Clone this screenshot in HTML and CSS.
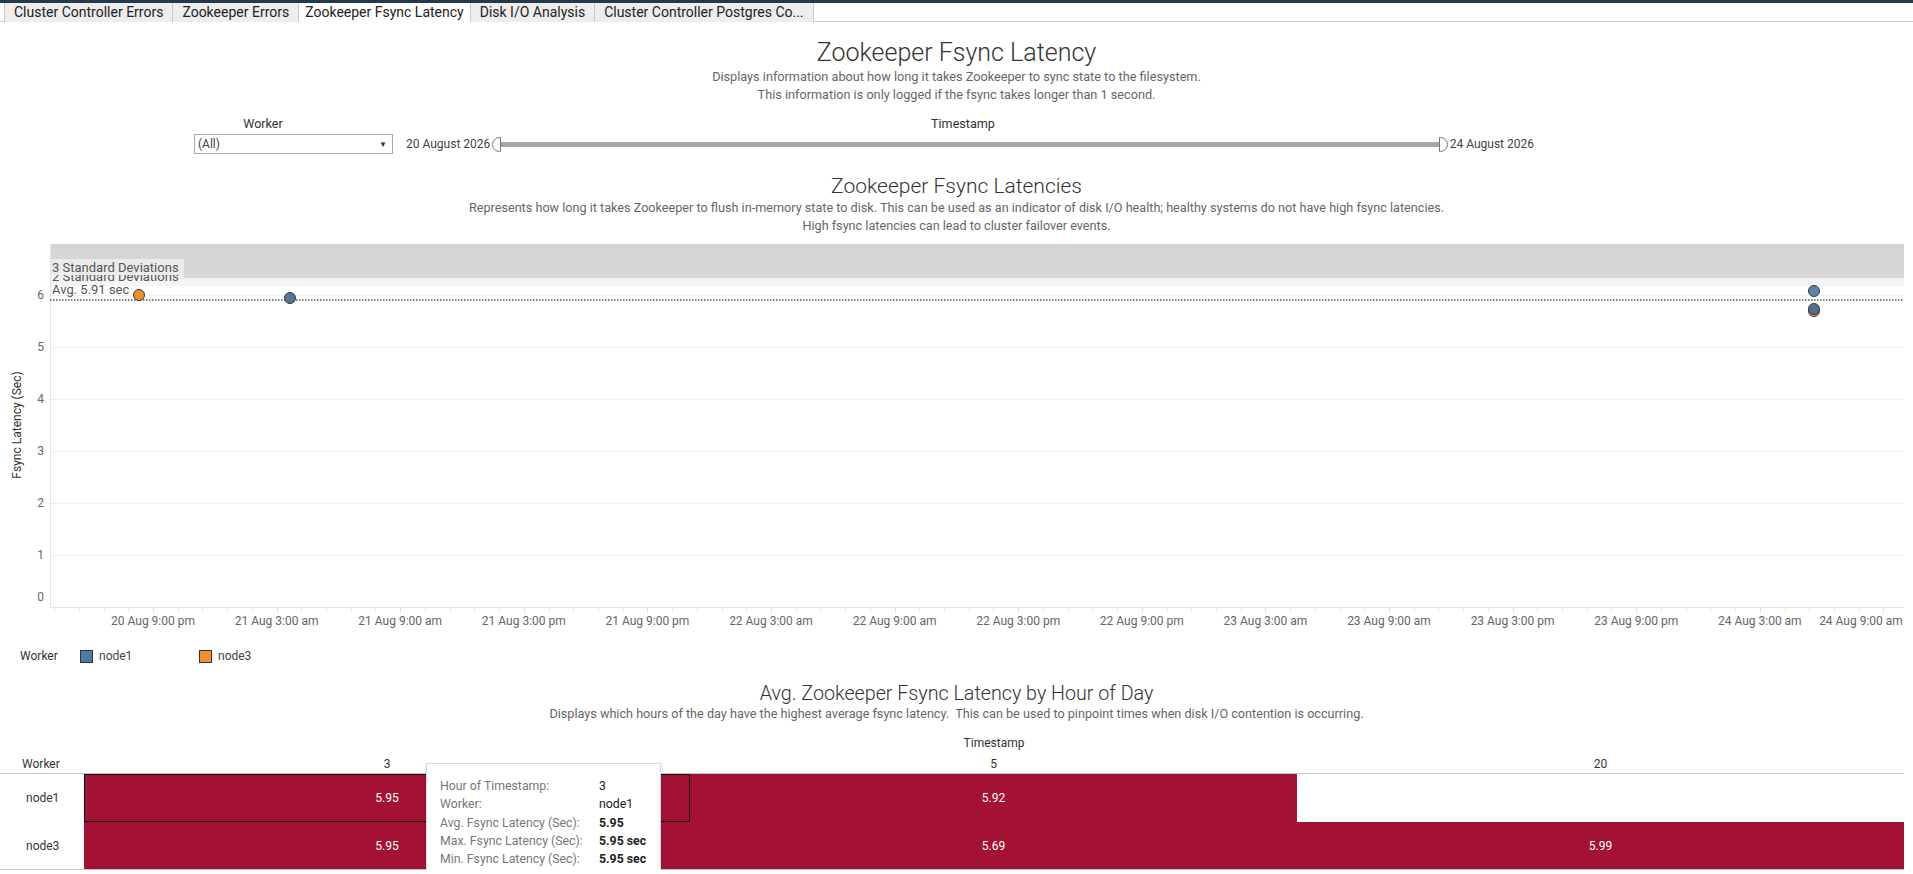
FILE: index.html
```html
<!DOCTYPE html>
<html lang="en">
<head>
    <meta charset="UTF-8">
    <meta name="viewport" content="width=device-width, initial-scale=1.0">
    <title>Zookeeper Fsync Latency</title>
    <link rel="stylesheet" href="styles.css">
</head>
<body>
    <!-- 工作表标签 -->
    <div class="tabbar">
        <span class="tab">Cluster Controller Errors</span>
        <span class="tab">Zookeeper Errors</span>
        <span class="tab active">Zookeeper Fsync Latency</span>
        <span class="tab">Disk I/O Analysis</span>
        <span class="tab">Cluster Controller Postgres Co...</span>
    </div>

    <div class="dashboard">
        <div class="page-head">
            <h1>Zookeeper Fsync Latency</h1>
            <p>Displays information about how long it takes Zookeeper to sync state to the filesystem.<br>This information is only logged if the fsync takes longer than 1 second.</p>
        </div>

        <!-- 筛选器 -->
        <div class="filters">
            <div class="filter worker-filter">
                <div class="filter-label">Worker</div>
                <div class="select">
                    <span>(All)</span>
                    <span class="caret">&#9660;</span>
                </div>
            </div>
            <div class="filter time-filter">
                <div class="filter-label">Timestamp</div>
                <div class="slider">
                    <span class="date">20 August 2026</span>
                    <span class="handle handle-left"></span>
                    <span class="track"></span>
                    <span class="handle handle-right"></span>
                    <span class="date">24 August 2026</span>
                </div>
            </div>
        </div>

        <!-- 散点图 -->
        <div class="chart">
            <h2>Zookeeper Fsync Latencies</h2>
            <p class="sub">Represents how long it takes Zookeeper to flush in-memory state to disk. This can be used as an indicator of disk I/O health; healthy systems do not have high fsync latencies.<br>High fsync latencies can lead to cluster failover events.</p>
            <svg class="plot" id="plot" width="1913" height="395" viewBox="0 0 1913 395">
                <rect x="50" y="4" width="1854" height="34" fill="#d6d6d6"/>
                <rect x="50" y="38" width="1854" height="8" fill="#f4f4f4"/>
                <g id="grid" stroke="#efefef" stroke-width="1"></g>
                <line x1="50.5" y1="4" x2="50.5" y2="367" stroke="#e4e4e4"/>
                <line x1="50" y1="367.5" x2="1904" y2="367.5" stroke="#e4e4e4"/>
                <g id="ticks" stroke="#e0e0e0" stroke-width="1"></g>

                <!-- 参考线标签 -->
                <rect x="51" y="29" width="133" height="10" fill="#f0f0f0"/>
                <text class="band-label" x="52" y="41">2 Standard Deviations</text>
                <rect x="51" y="19" width="133" height="16" fill="#ebebeb"/>
                <text class="band-label" x="52" y="32">3 Standard Deviations</text>
                <text class="band-label" x="52" y="54">Avg. 5.91 sec</text>

                <line x1="50" y1="60" x2="1904" y2="60" stroke="#555" stroke-width="1.3" stroke-dasharray="1.5 1.5"/>

                <circle cx="139" cy="55" r="5.5" fill="#f28e2b" stroke="#3a3a3a"/>
                <circle cx="290" cy="58" r="5.5" fill="#587591" stroke="#3a3a3a"/>
                <circle cx="1814" cy="51" r="5.5" fill="#5b83ad" stroke="#3a3a3a"/>
                <circle cx="1814" cy="71" r="5.5" fill="#f28e2b" stroke="#3a3a3a"/>
                <circle cx="1814" cy="69" r="5.5" fill="#53708f" stroke="#3a3a3a"/>

                <g class="y-labels">
                    <text x="44" y="59">6</text>
                    <text x="44" y="111">5</text>
                    <text x="44" y="163">4</text>
                    <text x="44" y="215">3</text>
                    <text x="44" y="267">2</text>
                    <text x="44" y="319">1</text>
                    <text x="44" y="361">0</text>
                </g>
                <text class="axis-title" transform="translate(21 185) rotate(-90)">Fsync Latency (Sec)</text>
                <g class="x-labels" id="xLabels"></g>
            </svg>
        </div>

        <!-- 图例 -->
        <div class="legend">
            <span class="legend-title">Worker</span>
            <span class="legend-item"><i class="swatch blue"></i>node1</span>
            <span class="legend-item"><i class="swatch orange"></i>node3</span>
        </div>

        <!-- 热力表 -->
        <div class="heatmap">
            <h2>Avg. Zookeeper Fsync Latency by Hour of Day</h2>
            <p class="sub">Displays which hours of the day have the highest average fsync latency.&nbsp; This can be used to pinpoint times when disk I/O contention is occurring.</p>
            <div class="col-title">Timestamp</div>
            <div class="table">
                <div class="head row-label">Worker</div>
                <div class="head">3</div>
                <div class="head">5</div>
                <div class="head">20</div>

                <div class="row-label">node1</div>
                <div class="cell filled selected">5.95</div>
                <div class="cell filled">5.92</div>
                <div class="cell"></div>

                <div class="row-label last">node3</div>
                <div class="cell filled last">5.95</div>
                <div class="cell filled last">5.69</div>
                <div class="cell filled last">5.99</div>

                <!-- 悬停提示 -->
                <div class="tooltip">
                    <span class="tip-key">Hour of Timestamp:</span><span class="tip-val">3</span>
                    <span class="tip-key">Worker:</span><span class="tip-val">node1</span>
                    <span class="tip-key">Avg. Fsync Latency (Sec):</span><b class="tip-val">5.95</b>
                    <span class="tip-key">Max. Fsync Latency (Sec):</span><b class="tip-val">5.95 sec</b>
                    <span class="tip-key">Min. Fsync Latency (Sec):</span><b class="tip-val">5.95 sec</b>
                </div>
            </div>
        </div>
    </div>

    <script>
        (function() {
            var ns = 'http://www.w3.org/2000/svg';
            var grid = document.querySelector('#grid');
            var ticks = document.querySelector('#ticks');
            var xLabels = document.querySelector('#xLabels');

            // 水平网格线 6..1
            [55, 107, 159, 211, 263, 315].forEach(function(y) {
                var line = document.createElementNS(ns, 'line');
                line.setAttribute('x1', 51);
                line.setAttribute('x2', 1904);
                line.setAttribute('y1', y + 0.5);
                line.setAttribute('y2', y + 0.5);
                grid.appendChild(line);
            });

            // 时间轴刻度
            var names = ['20 Aug 9:00 pm', '21 Aug 3:00 am', '21 Aug 9:00 am', '21 Aug 3:00 pm', '21 Aug 9:00 pm',
                '22 Aug 3:00 am', '22 Aug 9:00 am', '22 Aug 3:00 pm', '22 Aug 9:00 pm', '23 Aug 3:00 am',
                '23 Aug 9:00 am', '23 Aug 3:00 pm', '23 Aug 9:00 pm', '24 Aug 3:00 am', '24 Aug 9:00 am'];
            var step = 123.6;
            for (var m = 153 - step; m < 1904; m += step / 5) {
                if (m < 51) continue;
                var tick = document.createElementNS(ns, 'line');
                var x = Math.round(m) + 0.5;
                tick.setAttribute('x1', x);
                tick.setAttribute('x2', x);
                tick.setAttribute('y1', 368);
                tick.setAttribute('y2', 371);
                ticks.appendChild(tick);
            }
            names.forEach(function(name, i) {
                var x = 153 + i * step;
                var major = document.createElementNS(ns, 'line');
                major.setAttribute('x1', Math.round(x) + 0.5);
                major.setAttribute('x2', Math.round(x) + 0.5);
                major.setAttribute('y1', 368);
                major.setAttribute('y2', 373);
                ticks.appendChild(major);

                var text = document.createElementNS(ns, 'text');
                text.setAttribute('x', i === names.length - 1 ? 1861 : x);
                text.setAttribute('y', 385);
                text.textContent = name;
                xLabels.appendChild(text);
            });
        })();
    </script>
</body>
</html>
```

FILE: styles.css
```css
* {
    margin: 0;
    padding: 0;
    box-sizing: border-box;
}
body {
    width: 1913px;
    font-family: Roboto, "Noto Sans", sans-serif;
    color: #333;
    background: #fff;
    overflow: hidden;
}

.tabbar {
    display: flex;
    height: 22px;
    padding-left: 4px;
    border-top: 3px solid #24394a;
    border-bottom: 1px solid #c9c9c9;
}
.tab {
    height: 19px;
    padding: 0 9px;
    font-size: 14px;
    line-height: 18px;
    color: #222;
    background: #ededed;
    border-left: 1px solid #c9c9c9;
    white-space: nowrap;
}
.tab:last-child {
    border-right: 1px solid #c9c9c9;
}
.tab.active {
    height: 19px;
    padding: 0 6px;
    background: #fff;
}

.page-head {
    margin-top: 16px;
    text-align: center;
}
.page-head h1 {
    font-size: 25px;
    font-weight: 300;
    line-height: 30px;
    color: #333;
}
.page-head p {
    font-size: 12.7px;
    line-height: 18px;
    color: #666;
}

.filters {
    display: flex;
    gap: 13px;
    margin-top: 12px;
    padding-left: 194px;
}
.filter-label {
    font-size: 12.6px;
    line-height: 16px;
    color: #333;
    text-align: center;
}
.worker-filter .filter-label {
    width: 138px;
}
.select {
    display: flex;
    align-items: center;
    justify-content: space-between;
    width: 199px;
    height: 20px;
    margin-top: 2px;
    padding: 0 5px 0 3px;
    font-size: 12px;
    color: #444;
    border: 1px solid #a8a8a8;
}
.caret {
    font-size: 8px;
    color: #333;
}
.time-filter {
    width: 1128px;
}
.time-filter .filter-label {
    padding-right: 14px;
}
.slider {
    display: flex;
    align-items: center;
    height: 20px;
    margin-top: 2px;
}
.date {
    font-size: 12px;
    color: #444;
    white-space: nowrap;
}
.handle {
    width: 9px;
    height: 15px;
    background: #fff;
    border: 1px solid #777;
}
.handle-left {
    margin-left: 2px;
    border-radius: 8px 0 0 8px;
}
.handle-right {
    margin-right: 2px;
    border-radius: 0 8px 8px 0;
}
.track {
    flex: 1;
    height: 5px;
    background: #a6a6a6;
}

.chart h2,
.heatmap h2 {
    font-weight: 300;
    color: #333;
    text-align: center;
}
.chart h2 {
    margin-top: 19px;
    font-size: 21px;
    line-height: 26px;
}
.chart .sub {
    font-size: 12.65px;
    line-height: 18px;
    color: #666;
    text-align: center;
}
.plot {
    display: block;
    margin-top: 5px;
    font-family: Roboto, "Noto Sans", sans-serif;
}
.band-label {
    font-size: 13px;
    fill: #555;
}
.y-labels text {
    font-size: 12px;
    fill: #666;
    text-anchor: end;
}
.axis-title {
    font-size: 12px;
    fill: #333;
    text-anchor: middle;
}
.x-labels text {
    font-size: 12px;
    fill: #666;
    text-anchor: middle;
}

.legend {
    display: flex;
    align-items: center;
    height: 14px;
    margin-top: 14px;
    padding-left: 20px;
    font-size: 12px;
}
.legend-title {
    width: 60px;
    color: #333;
}
.legend-item {
    display: flex;
    align-items: center;
    width: 119px;
    color: #444;
}
.swatch {
    width: 13px;
    height: 13px;
    margin-right: 6px;
    border: 1px solid #333;
}
.swatch.blue {
    background: #4e79a7;
}
.swatch.orange {
    background: #f28e2b;
}

.heatmap h2 {
    margin-top: 19px;
    font-size: 19.7px;
    line-height: 24px;
}
.heatmap .sub {
    font-size: 12.65px;
    line-height: 16px;
    color: #666;
    text-align: center;
}
.col-title {
    margin-top: 13px;
    padding-left: 84px;
    width: 1904px;
    font-size: 12px;
    line-height: 16px;
    text-align: center;
    color: #333;
}
.table {
    position: relative;
    display: grid;
    grid-template-columns: 84px 606px 607px 607px;
    grid-template-rows: 22px 48px 48px;
    width: 1904px;
    margin-top: 1px;
    font-size: 12px;
}
.head {
    padding-top: 4px;
    line-height: 16px;
    text-align: center;
    color: #333;
    border-bottom: 1px solid #c4c4c4;
}
.head.row-label {
    display: block;
    padding-left: 22px;
    text-align: left;
}
.row-label {
    display: flex;
    align-items: center;
    padding-left: 26px;
    color: #333;
}
.row-label.last,
.cell.last {
    border-bottom: 1px solid #c4c4c4;
}
.cell {
    display: flex;
    align-items: center;
    justify-content: center;
    color: #fff;
}
.cell.filled {
    background: #a31232;
}
.cell.selected {
    outline: 1.5px solid #111;
    outline-offset: -1px;
}

.tooltip {
    position: absolute;
    left: 426px;
    top: 11px;
    display: grid;
    grid-template-columns: 159px auto;
    align-content: start;
    row-gap: 2px;
    width: 235px;
    height: 115px;
    padding: 14px 0 0 13px;
    font-size: 12.3px;
    line-height: 16.3px;
    background: #fff;
    border: 1px solid #d9d9d9;
    box-shadow: 0 1px 4px rgba(0, 0, 0, 0.12);
}
.tip-key {
    color: #777;
}
.tip-val {
    color: #222;
}
b.tip-val {
    font-weight: 700;
}
```
